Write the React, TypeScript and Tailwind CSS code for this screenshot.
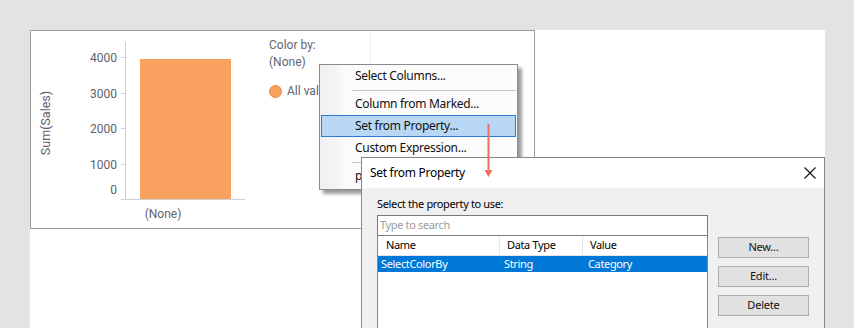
import React from "react";

const ui = { fontFamily: '"Noto Sans", "Open Sans", sans-serif' };
const rob = { fontFamily: 'Roboto, "Noto Sans", sans-serif' };

function Chart() {
  return (
    <svg width="235" height="197" className="block shrink-0" style={rob}>
      <text
        x="14"
        y="92"
        transform="rotate(-90 14 92)"
        textAnchor="middle"
        dominantBaseline="central"
        fontSize="12.5"
        fill="#5f6170"
      >
        Sum(Sales)
      </text>
      {[
        ["4000", 26],
        ["3000", 62],
        ["2000", 97],
        ["1000", 133],
      ].map(([t, y]) => (
        <g key={t as string}>
          <text x="86" y={(y as number) + 4.5} textAnchor="end" fontSize="12" fill="#5f6170">
            {t}
          </text>
          <line x1="90" x2="94" y1={(y as number) + 0.5} y2={(y as number) + 0.5} stroke="#cfd0d8" />
        </g>
      ))}
      <text x="86" y="163" textAnchor="end" fontSize="12" fill="#5f6170">
        0
      </text>
      <line x1="94.5" x2="94.5" y1="11" y2="168" stroke="#cfd0d8" />
      <line x1="90" x2="214" y1="168.5" y2="168.5" stroke="#cfd0d8" />
      <rect x="109" y="28" width="91" height="140" fill="#f9a15f" />
      <text x="132" y="187" textAnchor="middle" fontSize="12" fill="#5f6170">
        (None)
      </text>
    </svg>
  );
}

function MenuItem({ label, active }: { label: string; active?: boolean }) {
  if (active) {
    return (
      <div className="h-[22px] mx-px flex items-center pl-[33px] border border-[#2a7bd4] bg-[#b7d7f4] text-[12px] tracking-[-0.3px] text-[#111]">
        {label}
      </div>
    );
  }
  return (
    <div className="h-[22px] flex items-center pl-[35px] text-[12px] tracking-[-0.3px] text-[#111]">{label}</div>
  );
}

function Sep() {
  return (
    <div className="h-[6px] flex items-center pl-[32px] pr-px">
      <div className="h-px flex-1 bg-[#c6c6c6]" />
    </div>
  );
}

function Btn({ label }: { label: string }) {
  return (
    <div className="w-[91px] h-[21px] border border-[#adadad] bg-[#e1e1e1] flex items-center justify-center text-[11px] tracking-[-0.2px] text-[#111]">
      {label}
    </div>
  );
}

export default function App() {
  return (
    <div className="relative w-[854px] h-[328px] overflow-hidden bg-[#e3e3e3] pt-[30px] pl-[30px]">
      <div className="w-[795px] h-[298px] bg-white">
        <div className="w-[505px] h-[199px] border border-[#9c9c9c] flex">
          <Chart />
          <div className="w-[104px] pl-[3px] pt-[6px] text-[12px] leading-[17px] text-[#62646f]" style={rob}>
            <div>Color by:</div>
            <div>(None)</div>
            <div className="mt-[12px] flex items-center gap-[5px] h-[17px] whitespace-nowrap">
              <span className="w-[13px] h-[13px] rounded-full bg-[#f9a15f] border border-[#e58a48]" />
              <span>All values</span>
            </div>
          </div>
          <div className="w-px h-[34px] bg-[#ececf0]" />
        </div>
      </div>

      {/* context menu */}
      <div
        className="absolute left-[319px] top-[64px] w-[199px] h-[126px] border border-[#8a8a8a] shadow-[4px_4px_3px_rgba(0,0,0,0.38)] bg-[linear-gradient(to_right,#f0f0f0_0px,#f5f5f5_18px,#fbfbfb_24px,#fcfcfc_100%)]"
        style={ui}
      >
        <MenuItem label="Select Columns..." />
        <Sep />
        <MenuItem label="Column from Marked..." />
        <MenuItem label="Set from Property..." active />
        <MenuItem label="Custom Expression..." />
        <Sep />
        <MenuItem label="p" />
      </div>

      {/* dialog */}
      <div
        className="absolute left-[361px] top-[157px] w-[464px] h-[200px] border border-[#888] bg-[#f0f0f0] flex flex-col"
        style={ui}
      >
        <div className="h-[30px] bg-white flex items-center justify-between pl-[8px] pr-[7px] shrink-0">
          <span className="text-[12px] tracking-[-0.3px] text-[#000]">Set from Property</span>
          <svg width="14" height="14" viewBox="0 0 14 14">
            <path d="M1.5 1.5 L12.5 12.5 M12.5 1.5 L1.5 12.5" stroke="#111" strokeWidth="1.1" />
          </svg>
        </div>
        <div className="pl-[15px] pt-[8px] flex-1 tracking-[-0.35px]">
          <div className="text-[11px] leading-[15px] text-[#000]">Select the property to use:</div>
          <div className="mt-[4px] flex">
            <div className="w-[331px]">
              <div className="h-[21px] border border-[#7a7a7a] bg-white flex items-center pl-[2px] text-[11px] text-[#9b9b9b]">
                Type to search
              </div>
              <div className="h-[120px] border-x border-b border-[#828790] bg-white">
                <div className="h-[20px] flex border-b border-[#e5e5e5] text-[11px] text-[#000]">
                  <div className="w-[122px] border-r border-[#e5e5e5] pl-[8px] flex items-center">Name</div>
                  <div className="w-[83px] border-r border-[#e5e5e5] pl-[7px] flex items-center">Data Type</div>
                  <div className="flex-1 pl-[7px] flex items-center">Value</div>
                </div>
                <div className="h-[16px] flex bg-[#0078d7] text-[11px] text-white">
                  <div className="w-[123px] pl-[3px] flex items-center">SelectColorBy</div>
                  <div className="w-[84px] pl-[3px] flex items-center">String</div>
                  <div className="flex-1 pl-[3px] flex items-center">Category</div>
                </div>
              </div>
            </div>
            <div className="ml-[10px] pt-[22px] flex flex-col gap-[8px]">
              <Btn label="New..." />
              <Btn label="Edit..." />
              <Btn label="Delete" />
            </div>
          </div>
        </div>
      </div>

      {/* arrow */}
      <svg className="absolute left-[482px] top-[123px]" width="12" height="56">
        <line x1="6.5" x2="6.5" y1="1" y2="49" stroke="#ef6f5f" strokeWidth="2" />
        <path d="M2.5 47 L10.5 47 L6.5 54 Z" fill="#ef6f5f" />
      </svg>
    </div>
  );
}
